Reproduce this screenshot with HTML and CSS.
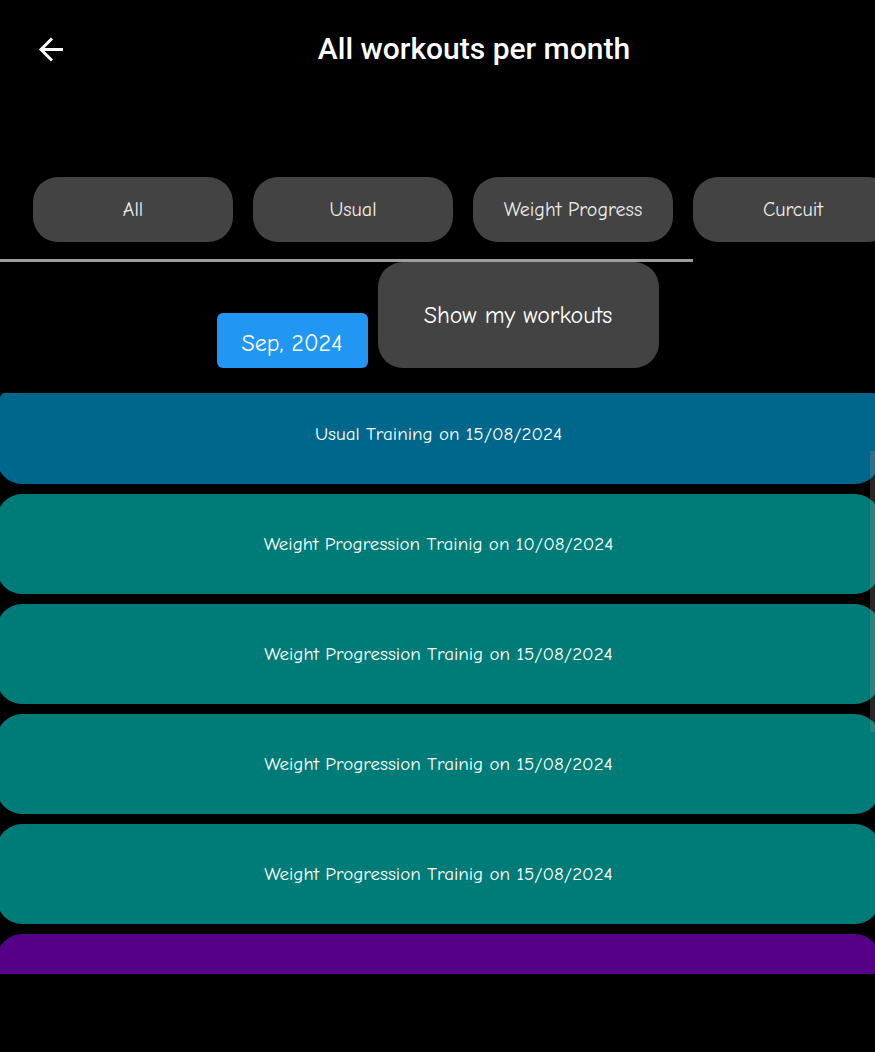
FILE: index.html
```html
<!DOCTYPE html>
<html lang="en">
<head>
<meta charset="utf-8">
<meta name="viewport" content="width=device-width, initial-scale=1">
<title>All workouts per month</title>
<link rel="stylesheet" href="styles.css">
</head>
<body>
<header class="topbar">
  <button class="back" type="button" aria-label="Back">
    <svg width="28" height="28" viewBox="0 0 28 28" fill="none" stroke="#fff" stroke-width="3" aria-hidden="true">
      <path d="M26 14.5H4M15 3.5L4 14.5L15 25.5"/>
    </svg>
  </button>
  <h1 class="title">All workouts per month</h1>
</header>
<nav class="filters" aria-label="Workout type">
  <button class="pill filter" type="button">All</button>
  <button class="pill filter" type="button">Usual</button>
  <button class="pill filter" type="button">Weight Progress</button>
  <button class="pill filter" type="button">Curcuit</button>
</nav>
<div class="track"><div class="thumb"></div></div>
<section class="actions">
  <button class="month" type="button">Sep, 2024</button>
  <button class="pill show" type="button">Show my workouts</button>
</section>
<main class="workouts">
  <div class="list">
    <button class="card usual" type="button">Usual Training on 15/08/2024</button>
    <button class="card weight" type="button">Weight Progression Trainig on 10/08/2024</button>
    <button class="card weight" type="button">Weight Progression Trainig on 15/08/2024</button>
    <button class="card weight" type="button">Weight Progression Trainig on 15/08/2024</button>
    <button class="card weight" type="button">Weight Progression Trainig on 15/08/2024</button>
    <button class="card circuit" type="button" aria-label="Workout"></button>
  </div>
  <div class="scrollbar"></div>
</main>
</body>
</html>
```
FILE: styles.css
```css
* { box-sizing: border-box; }

body {
  margin: 0;
  height: 100vh;
  padding-bottom: 78px;
  display: flex;
  flex-direction: column;
  overflow: hidden;
  background: #000;
  color: #fff;
  font-family: "Comic Sans MS", "Comic Neue", Lato, sans-serif;
}

button {
  border: 0;
  padding: 0;
  color: inherit;
  font: inherit;
  cursor: pointer;
}

.topbar {
  flex: none;
  display: flex;
  align-items: center;
  height: 98px;
  padding-left: 37px;
}

.back {
  display: flex;
  background: none;
}

.title {
  flex: 1;
  margin: 0;
  padding-left: 8px;
  text-align: center;
  font: 500 30px/36px Roboto, sans-serif;
}

.filters {
  flex: none;
  display: flex;
  gap: 20px;
  margin-top: 79px;
  padding: 0 33px 17px;
  overflow: hidden;
}

.pill {
  background: #434343;
  border-radius: 25px;
}

.filter {
  flex: none;
  width: 200px;
  height: 65px;
  color: #eee;
  font-size: 20px;
}

.track {
  flex: none;
  height: 3px;
}

.thumb {
  width: 79.2%;
  height: 100%;
  background: #9e9c9e;
}

.actions {
  flex: none;
  display: flex;
  justify-content: center;
  align-items: flex-end;
  gap: 10px;
  margin-bottom: 25px;
  font-size: 24px;
}

.month {
  width: 151px;
  height: 55px;
  padding-top: 4px;
  border-radius: 6px;
  background: #2196f3;
}

.show {
  width: 281px;
  height: 106px;
}

.workouts {
  flex: 1;
  min-height: 0;
  position: relative;
  overflow: hidden;
}

.list {
  display: flex;
  flex-direction: column;
  gap: 10px;
  margin: -9px -5px 0 -3px;
}

.card {
  flex: none;
  height: 100px;
  border-radius: 25px;
  font-size: 19px;
}

.usual { background: #00678c; }
.weight { background: #007c78; }
.circuit { background: #560087; }

.scrollbar {
  position: absolute;
  top: 10%;
  right: 0;
  width: 5px;
  height: 281px;
  background: rgba(150, 140, 140, 0.27);
}
```
